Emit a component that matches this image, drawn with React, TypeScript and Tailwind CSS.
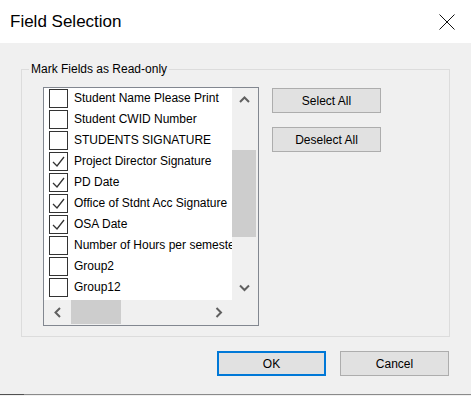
import React from 'react';

const fields = [
  { name: 'Student Name Please Print', checked: false },
  { name: 'Student CWID Number', checked: false },
  { name: 'STUDENTS SIGNATURE', checked: false },
  { name: 'Project Director Signature', checked: true },
  { name: 'PD Date', checked: true },
  { name: 'Office of Stdnt Acc Signature', checked: true },
  { name: 'OSA Date', checked: true },
  { name: 'Number of Hours per semester', checked: false },
  { name: 'Group2', checked: false },
  { name: 'Group12', checked: false },
];

function Chevron({ dir }: { dir: 'up' | 'down' | 'left' | 'right' }) {
  const pts = {
    up: '1,6 5.5,1.5 10,6',
    down: '1,1.5 5.5,6 10,1.5',
    left: '6,1 1.5,5.5 6,10',
    right: '1.5,1 6,5.5 1.5,10',
  }[dir];
  const vertical = dir === 'up' || dir === 'down';
  return (
    <svg width={vertical ? 11 : 8} height={vertical ? 8 : 11} viewBox={vertical ? '0 0 11 8' : '0 0 8 11'}>
      <polyline points={pts} fill="none" stroke="#606060" strokeWidth="2" />
    </svg>
  );
}

function FieldRow({ name, checked }: { name: string; checked: boolean }) {
  return (
    <div className="flex h-[21px] items-start">
      <div className="ml-[5px] mt-[1px] flex h-[19px] w-[19px] shrink-0 items-center justify-center border border-[#333333] bg-white">
        {checked && (
          <svg width="17" height="17" viewBox="0 0 17 17">
            <polyline points="3,9 7,13 14,4" fill="none" stroke="#333333" strokeWidth="1.3" />
          </svg>
        )}
      </div>
      <span className="ml-[6px] whitespace-nowrap text-[12px] leading-[21px] text-black">{name}</span>
    </div>
  );
}

function WinButton({ label, primary }: { label: string; primary?: boolean }) {
  return (
    <button
      className={`flex h-[25px] w-[109px] items-center justify-center bg-[#e1e1e1] text-[12px] text-black ${
        primary ? 'border-2 border-[#0078d7]' : 'border border-[#adadad]'
      }`}
    >
      {label}
    </button>
  );
}

export default function App() {
  return (
    <div className="flex h-[396px] w-[471px] flex-col overflow-hidden bg-[#f0f0f0] font-['Liberation_Sans',Arial,sans-serif]">
      <div className="flex h-[43px] shrink-0 items-center justify-between bg-white pl-[10px] pr-[16px]">
        <span className="text-[17px] text-black">Field Selection</span>
        <svg width="16" height="16" viewBox="0 0 16 16">
          <path d="M0.5 0.5 L15.5 15.5 M15.5 0.5 L0.5 15.5" stroke="#111111" strokeWidth="1" />
        </svg>
      </div>

      <div className="relative ml-[21px] mt-[26px] h-[268px] w-[429px] border border-[#dcdcdc]">
        <span className="absolute left-[7px] top-[-10px] bg-[#f0f0f0] px-[2px] text-[12px] leading-[18px] text-black">
          Mark Fields as Read-only
        </span>
        <div className="flex pl-[21px] pt-[17px]">
          <div className="grid h-[239px] w-[216px] grid-cols-[188px_26px] grid-rows-[212px_25px] border border-[#828790] bg-white">
            <div className="overflow-hidden">
              {fields.map((f) => (
                <FieldRow key={f.name} name={f.name} checked={f.checked} />
              ))}
            </div>
            <div className="flex flex-col bg-[#f0f0f0] pr-[2px]">
              <div className="flex h-[24px] items-center justify-center">
                <Chevron dir="up" />
              </div>
              <div className="mt-[38px] h-[87px] bg-[#cdcdcd]" />
              <div className="mt-auto flex h-[24px] items-center justify-center">
                <Chevron dir="down" />
              </div>
            </div>
            <div className="flex items-center bg-[#f0f0f0] pb-[1px]">
              <div className="flex h-full w-[27px] items-center justify-center">
                <Chevron dir="left" />
              </div>
              <div className="h-full w-[50px] bg-[#cdcdcd]" />
              <div className="ml-auto flex h-full w-[26px] items-center justify-center">
                <Chevron dir="right" />
              </div>
            </div>
            <div className="bg-[#f0f0f0]" />
          </div>

          <div className="ml-[13px] mt-[1px] flex flex-col gap-[14px]">
            <WinButton label="Select All" />
            <WinButton label="Deselect All" />
          </div>
        </div>
      </div>

      <div className="mt-[14px] flex justify-end gap-[14px] pr-[22px]">
        <WinButton label="OK" primary />
        <WinButton label="Cancel" />
      </div>

      <div className="mt-auto flex h-[2px] shrink-0">
        <div className="h-[1px] w-[24px] bg-[#505050]" />
        <div className="h-[1px] flex-1 bg-[#8a8a8a]" />
      </div>
    </div>
  );
}
